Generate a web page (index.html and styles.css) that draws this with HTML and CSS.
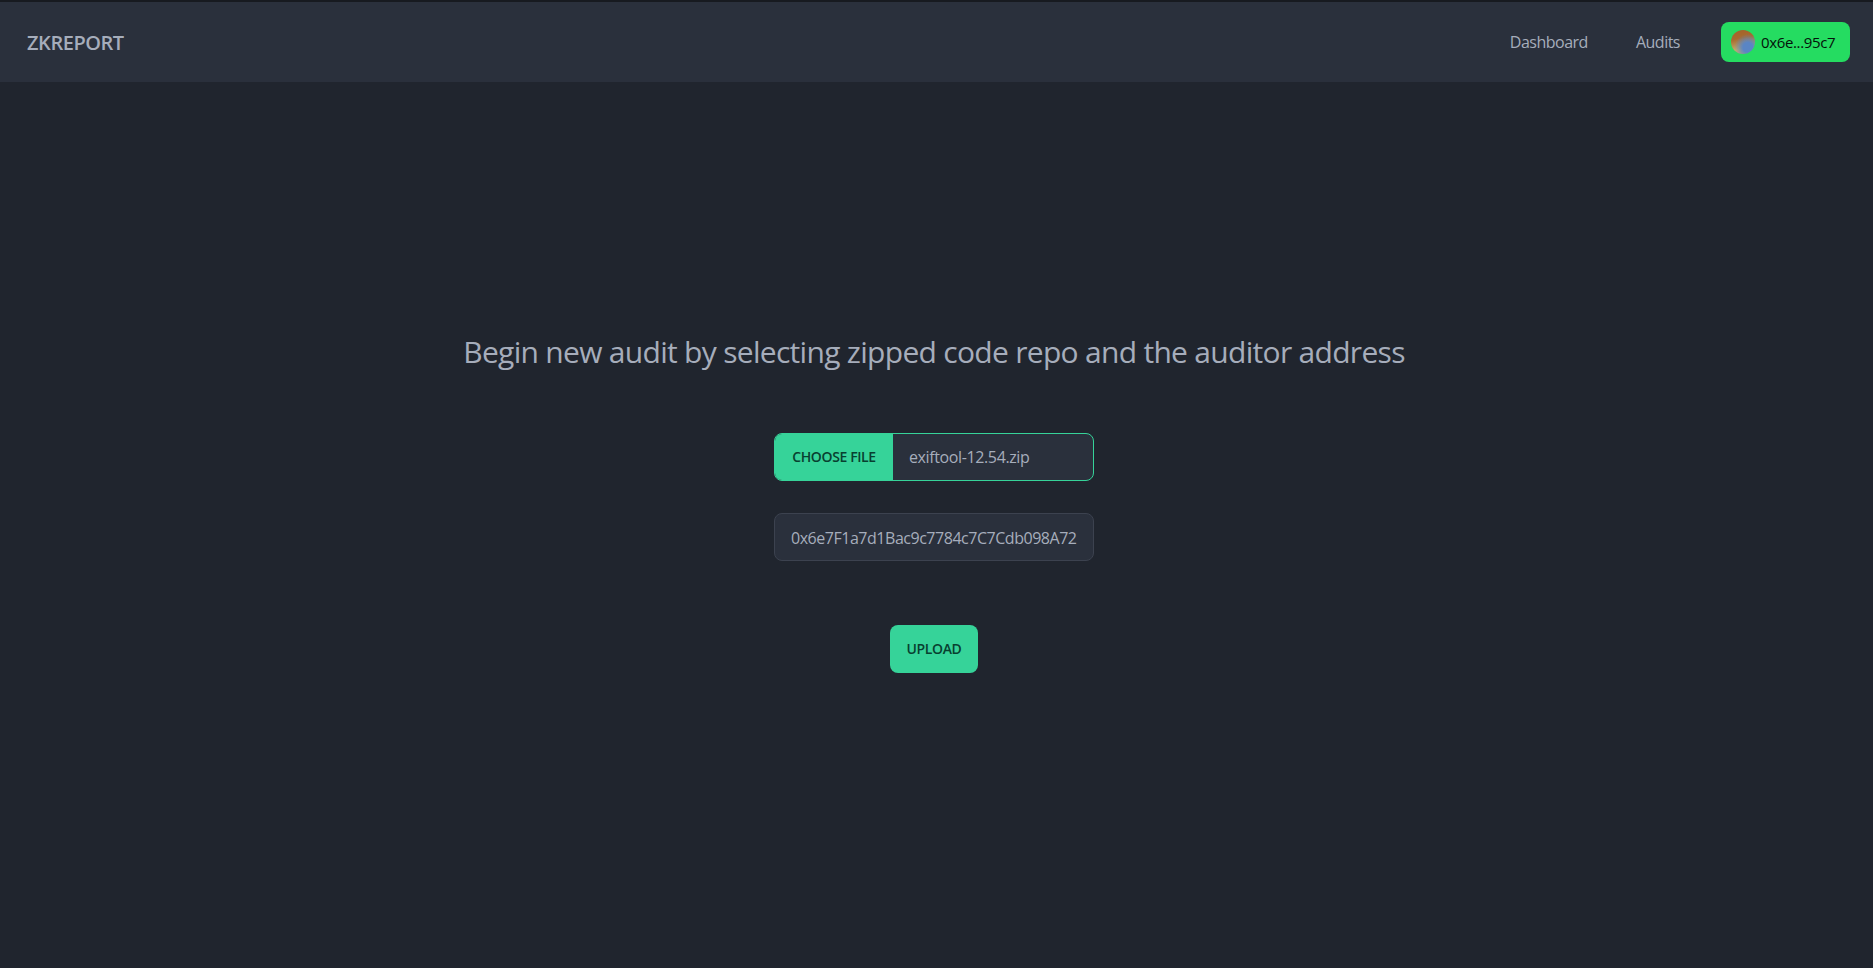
FILE: index.html
```html
<!DOCTYPE html>
<html lang="en">
<head>
<meta charset="utf-8">
<title>ZKREPORT</title>
<link rel="stylesheet" href="styles.css">
</head>
<body>
<div class="topline"></div>
<nav class="navbar">
  <a class="brand">ZKREPORT</a>
  <div class="nav-links">
    <a class="nav-link">Dashboard</a>
    <a class="nav-link nav-link-last">Audits</a>
    <button class="wallet"><span class="avatar"></span><span>0x6e...95c7</span></button>
  </div>
</nav>
<main class="content">
  <h1 class="title">Begin new audit by selecting zipped code repo and the auditor address</h1>
  <div class="file-input">
    <span class="file-btn">CHOOSE FILE</span>
    <span class="file-name">exiftool-12.54.zip</span>
  </div>
  <div class="text-input"><span class="text-value">0x6e7F1a7d1Bac9c7784c7C7Cdb098A72</span></div>
  <button class="upload">UPLOAD</button>
</main>
</body>
</html>
```
FILE: styles.css
```css
* { box-sizing: border-box; }
html, body { margin: 0; height: 100%; }
body {
  background: #20252e;
  font-family: "Open Sans", "Noto Sans", sans-serif;
  color: #a6adbb;
  display: flex;
  flex-direction: column;
  height: 968px;
  overflow: hidden;
}
.topline { height: 2px; background: #171a20; flex: none; }
.navbar {
  height: 80px;
  flex: none;
  background: #2a303c;
  display: flex;
  align-items: center;
  justify-content: space-between;
  padding: 0 23px 0 27px;
}
.brand { font-size: 20px; font-weight: 600; letter-spacing: -0.45px; }
.nav-links { display: flex; align-items: center; }
.nav-link { font-size: 16px; margin-right: 48px; letter-spacing: -0.5px; }
.nav-link-last { margin-right: 41px; }
.wallet {
  width: 129px;
  height: 40px;
  border: 0;
  border-radius: 8px;
  background: #25dc61;
  color: #04120a;
  font: 500 15px "Open Sans", sans-serif;
  letter-spacing: -0.35px;
  display: flex;
  align-items: center;
  gap: 6px;
  padding: 0 10px;
}
.avatar {
  width: 24px;
  height: 24px;
  border-radius: 50%;
  flex: none;
  background:
    radial-gradient(circle at 70% 72%, #5a85c4 0, #5a85c4 20%, rgba(90,133,196,0) 55%),
    linear-gradient(170deg, #a3622a 0%, #a86a2e 35%, #c2ad6c 75%, #b3a47a 100%);
}
.content {
  display: flex;
  flex-direction: column;
  align-items: center;
  flex: 1;
  padding: 250px 5px 0 0;
}
.title {
  margin: 0 0 61px;
  font-size: 30px;
  line-height: 40px;
  font-weight: 400;
  letter-spacing: -0.7px;
  color: #a6adbb;
}
.file-input {
  width: 320px;
  height: 48px;
  display: flex;
  align-items: stretch;
  border: 1px solid #36d399;
  border-radius: 8px;
  background: #2a303c;
  overflow: hidden;
  margin-bottom: 32px;
}
.file-btn {
  width: 118px;
  display: flex;
  align-items: center;
  justify-content: center;
  padding-bottom: 2px;
  background: #36d399;
  color: #084030;
  font-size: 14px;
  font-weight: 550;
  letter-spacing: -0.38px;
}
.file-name {
  display: flex;
  align-items: center;
  padding-bottom: 1px;
  padding-left: 16px;
  font-size: 16px;
  letter-spacing: -0.38px;
}
.text-input {
  width: 320px;
  height: 48px;
  display: flex;
  align-items: center;
  padding: 1px 16px 0;
  border: 1px solid #3c424f;
  border-radius: 8px;
  background: #2a303c;
  overflow: hidden;
  margin-bottom: 64px;
}
.text-value { font-size: 16px; letter-spacing: -0.47px; white-space: nowrap; overflow: hidden; }
.upload {
  width: 88px;
  height: 48px;
  border: 0;
  border-radius: 8px;
  padding: 0 0 2px;
  background: #36d399;
  color: #084030;
  font: 550 14px "Open Sans", sans-serif;
  letter-spacing: -0.38px;
}
```
